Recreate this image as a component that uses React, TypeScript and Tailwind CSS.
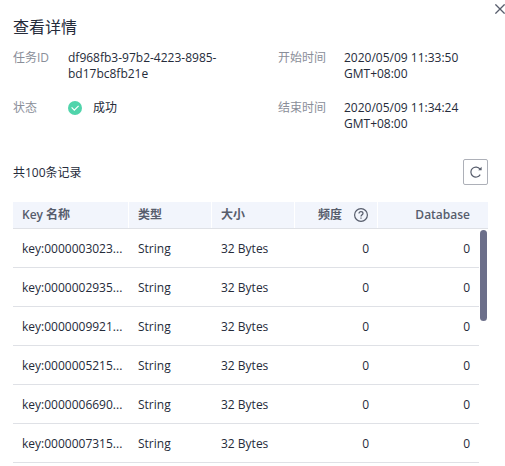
import React from "react";

const records = [
  "key:0000003023...",
  "key:0000002935...",
  "key:0000009921...",
  "key:0000005215...",
  "key:0000006690...",
  "key:0000007315...",
];

function CloseIcon() {
  return (
    <svg viewBox="0 0 10 10" className="size-[10px]" fill="none" stroke="#575d6c" strokeWidth="1.3" aria-hidden="true">
      <path d="M0.4 0.4 9.6 9.6M9.6 0.4 0.4 9.6" />
    </svg>
  );
}

function RefreshIcon() {
  return (
    <svg viewBox="0 0 12 12" className="size-3" fill="none" stroke="#575d6c" strokeWidth="1.2" aria-hidden="true">
      <path d="M10.2 8.6A5 5 0 1 1 10 3.2" />
      <path d="M11.6 0.8V4.2H8.2Z" fill="#575d6c" stroke="none" />
    </svg>
  );
}

function SuccessIcon() {
  return (
    <svg viewBox="0 0 14 14" className="size-[14px] shrink-0" aria-hidden="true">
      <circle cx="7" cy="7" r="7" fill="#50d4ab" />
      <path d="M3.6 6.4 6.3 9.1 10.6 4.9" fill="none" stroke="#fff" strokeWidth="1.2" />
    </svg>
  );
}

function HelpIcon() {
  return (
    <svg viewBox="0 0 14 14" className="size-[14px] shrink-0" fill="none" stroke="#575d6c" strokeWidth="1.2" aria-hidden="true">
      <circle cx="7" cy="7" r="6.4" />
      <path d="M5 5.6C5 4.3 5.8 3.6 7 3.6S9 4.3 9 5.4C9 6.7 7 6.8 7 8.4" />
      <path d="M7 9.5V10.7" />
    </svg>
  );
}

function Field({ label, children, wide }: { label: string; children: React.ReactNode; wide?: boolean }) {
  return (
    <div className="flex">
      <dt className={(wide ? "w-[66px]" : "w-[55px]") + " shrink-0 text-[#8a8e99]"}>{label}</dt>
      <dd className="min-w-0 flex-1">{children}</dd>
    </div>
  );
}

const headCell = "h-[27px] border-b border-[#dfe1e6] bg-[#f2f5fc] p-0 font-semibold";
const divider = "flex h-[26px] items-center border-r border-white";
const bodyCell = "h-[39px] border-b border-[#dfe1e6] pt-[2px] pb-0 pl-[9px]";

export default function App() {
  return (
    <main className="bg-white font-['Open_Sans','Noto_Sans_CJK_SC',sans-serif] text-xs leading-4 text-[#252b3a]">
      <div className="flex h-4 items-end justify-end pb-[2px]">
        <button type="button" aria-label="关闭">
          <CloseIcon />
        </button>
      </div>
      <div className="pr-[17px] pl-[13px]">
        <h1 className="text-base leading-[22px]">查看详情</h1>
        <dl className="mt-3 grid grid-cols-2 gap-x-[55px] gap-y-[18px]">
          <Field label="任务ID">df968fb3-97b2-4223-8985-bd17bc8fb21e</Field>
          <Field label="开始时间" wide>2020/05/09 11:33:50 GMT+08:00</Field>
          <Field label="状态">
            <span className="flex items-center gap-[11px]">
              <SuccessIcon />
              成功
            </span>
          </Field>
          <Field label="结束时间" wide>2020/05/09 11:34:24 GMT+08:00</Field>
        </dl>
        <div className="mt-[27px] flex items-center justify-between">
          <p className="pt-[2px]">共100条记录</p>
          <button
            type="button"
            aria-label="刷新"
            className="flex h-[26px] w-[25px] items-center justify-center rounded-[2px] border border-[#adb0b8]"
          >
            <RefreshIcon />
          </button>
        </div>
        <div className="relative mt-[17px]">
          <table className="w-full table-fixed border-separate border-spacing-0">
            <colgroup>
              <col className="w-[116px]" />
              <col className="w-[83px]" />
              <col className="w-[83px]" />
              <col className="w-[83px]" />
              <col />
              <col className="w-[9px]" />
            </colgroup>
            <thead className="text-left text-[#575d6c]">
              <tr>
                <th scope="col" className={headCell}>
                  <div className={divider + " pl-[9px]"}>Key 名称</div>
                </th>
                <th scope="col" className={headCell}>
                  <div className={divider + " pl-[9px]"}>类型</div>
                </th>
                <th scope="col" className={headCell}>
                  <div className={divider + " pl-[9px]"}>大小</div>
                </th>
                <th scope="col" className={headCell}>
                  <div className={divider + " justify-end gap-3 pr-[9px]"}>
                    频度
                    <HelpIcon />
                  </div>
                </th>
                <th scope="col" colSpan={2} className={headCell + " text-right"}>
                  <div className="pr-[18px]">Database</div>
                </th>
              </tr>
            </thead>
            <tbody>
              {records.map((name) => (
                <tr key={name}>
                  <td className={bodyCell + " whitespace-nowrap"}>{name}</td>
                  <td className={bodyCell}>String</td>
                  <td className={bodyCell}>32 Bytes</td>
                  <td className={bodyCell + " pr-[9px] text-right"}>0</td>
                  <td className={bodyCell + " pr-[9px] text-right"}>0</td>
                </tr>
              ))}
            </tbody>
          </table>
          <div className="absolute top-7 right-[1px] h-[91px] w-[7px] rounded-full bg-[#6c6f8a]" />
        </div>
      </div>
    </main>
  );
}
